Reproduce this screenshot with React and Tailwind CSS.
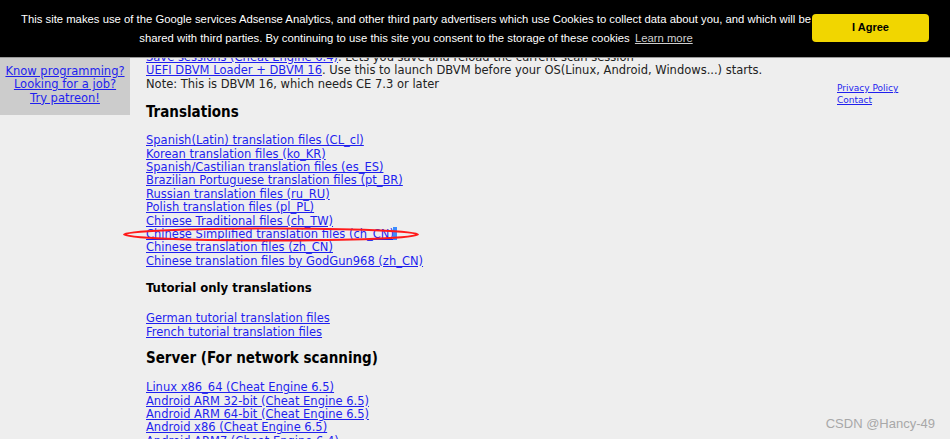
const link = 'text-[#1f1fee] underline'
const head = "font-['DejaVu_Sans_Condensed','DejaVu_Sans',Verdana,sans-serif] font-bold text-black"

const translations = [
  'Spanish(Latin) translation files (CL_cl)',
  'Korean translation files (ko_KR)',
  'Spanish/Castilian translation files (es_ES)',
  'Brazilian Portuguese translation files (pt_BR)',
  'Russian translation files (ru_RU)',
  'Polish translation files (pl_PL)',
  'Chinese Traditional files (ch_TW)',
  'Chinese Simplified translation files (ch_CN)',
  'Chinese translation files (zh_CN)',
  'Chinese translation files by GodGun968 (zh_CN)',
]

const servers = [
  'Linux x86_64 (Cheat Engine 6.5)',
  'Android ARM 32-bit (Cheat Engine 6.5)',
  'Android ARM 64-bit (Cheat Engine 6.5)',
  'Android x86 (Cheat Engine 6.5)',
  'Android ARM7 (Cheat Engine 6.4)',
]

function CookieBar() {
  return (
    <div className="absolute left-0 top-0 z-20 flex h-[58px] w-full items-center border-b border-[#9a9a9a] bg-black font-['Liberation_Sans',Arial,sans-serif]">
      <div className="flex-1 whitespace-nowrap pl-[20px] text-center text-[11.3px] leading-[19px] text-white">
        <p>This site makes use of the Google services Adsense Analytics, and other third party advertisers which use Cookies to collect data about you, and which will be</p>
        <p>
          shared with third parties. By continuing to use this site you consent to the storage of these cookies{' '}
          <span className="ml-[2px] text-[#cfcfcf] underline">Learn more</span>
        </p>
      </div>
      <button
        type="button"
        className="mr-[21px] mb-[2px] h-[28px] w-[117px] shrink-0 rounded-[4px] bg-[#f1d600] text-[11px] font-bold text-black"
      >
        I Agree
      </button>
    </div>
  )
}

export default function App() {
  return (
    <div className="relative h-[439px] w-[950px] overflow-hidden bg-[#eeeeee] font-['DejaVu_Sans',Verdana,sans-serif] text-[11.5px] leading-[13.4px] text-[#222]">
      <CookieBar />

      <div className="flex">
        <div className="flex h-[115px] w-[130px] shrink-0 flex-col items-center bg-[#cccccc] pt-[65px]">
          <a className={link}>Know programming?</a>
          <a className={link}>Looking for a job?</a>
          <a className={link}>Try patreon!</a>
        </div>

        <div className="flex-1 pl-[16px] pt-[51px]">
          <p className="whitespace-nowrap">
            <a className={link}>Save sessions (Cheat Engine 6.4)</a>. Lets you save and reload the current scan session
          </p>
          <p className="whitespace-nowrap">
            <a className={link}>UEFI DBVM Loader + DBVM 16</a>. Use this to launch DBVM before your OS(Linux, Android, Windows...) starts.
          </p>
          <p>Note: This is DBVM 16, which needs CE 7.3 or later</p>

          <h2 className={`${head} mt-[12px] text-[15px] leading-[18px]`}>Translations</h2>
          <div className="mt-[13px] flex flex-col items-start">
            {translations.map((t) => (
              <a key={t} className={link}>{t}</a>
            ))}
          </div>

          <h3 className={`${head} mt-[12px] text-[13px] leading-[16px]`}>Tutorial only translations</h3>
          <div className="mt-[16px] flex flex-col items-start">
            <a className={link}>German tutorial translation files</a>
            <a className={link}>French tutorial translation files</a>
          </div>

          <h2 className={`${head} mt-[9px] text-[15px] leading-[20px]`}>Server (For network scanning)</h2>
          <div className="mt-[13px] flex flex-col items-start">
            {servers.map((s) => (
              <a key={s} className={link}>{s}</a>
            ))}
          </div>
        </div>

        <div className="flex w-[113px] shrink-0 flex-col items-start pt-[83px] text-[9px] leading-[11.5px]">
          <a className={link}>Privacy Policy</a>
          <a className={link}>Contact</a>
        </div>
      </div>

      {/* annotation over the list */}
      <div className="absolute left-[393px] top-[227px] h-[13px] w-[4px] bg-[#3b8bff]" />
      <svg className="absolute left-[121px] top-[226px]" width="300" height="17" viewBox="0 0 300 17">
        <ellipse cx="150" cy="8.5" rx="147" ry="6" fill="none" stroke="#ff1a1a" strokeWidth="2" />
      </svg>

      <div className="absolute bottom-[9px] right-[15px] font-['Liberation_Sans',Arial,sans-serif] text-[13px] text-[#a8a8a8]">
        CSDN @Hancy-49
      </div>
    </div>
  )
}
